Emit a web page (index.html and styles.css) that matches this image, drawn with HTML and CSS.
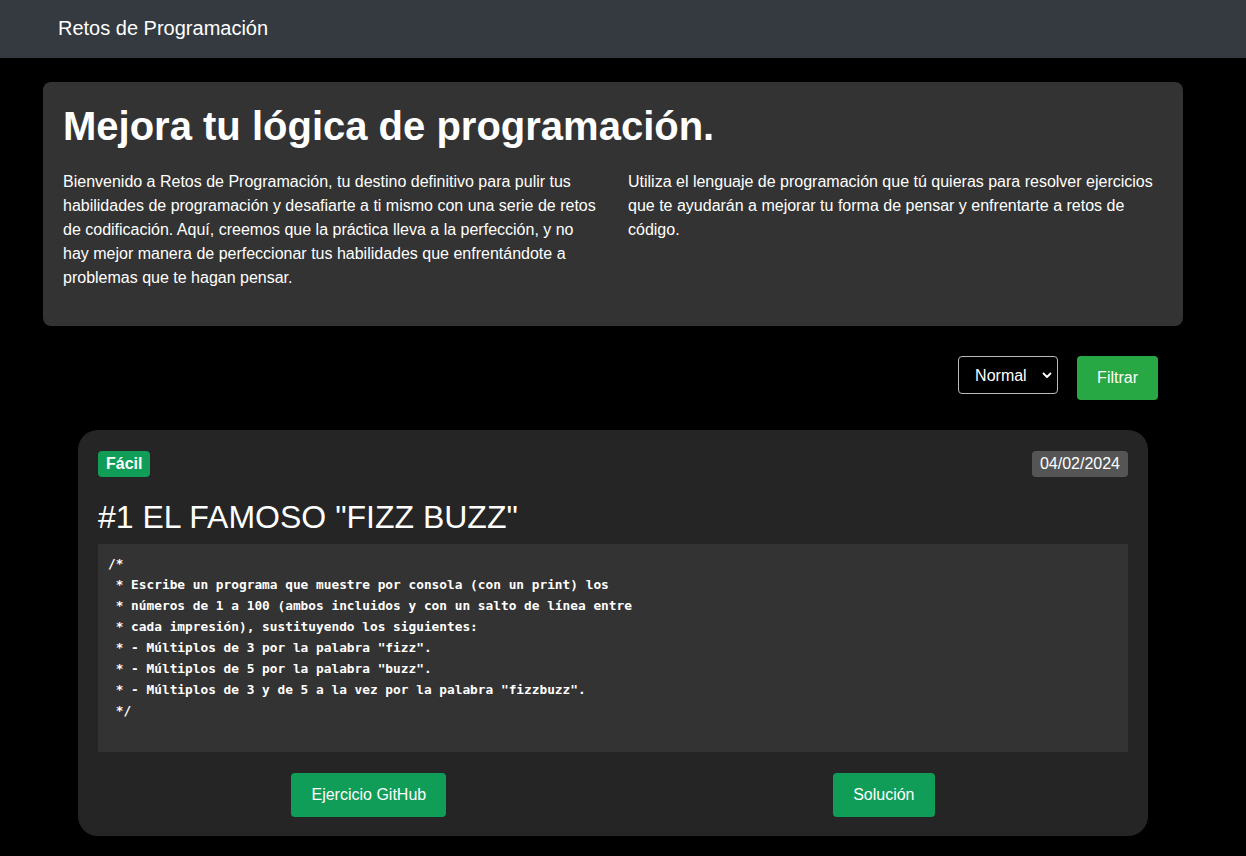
FILE: index.html
```html
<!DOCTYPE html>
<html lang="es">
<head>
<meta charset="utf-8">
<title>Retos de Programación</title>
<link rel="stylesheet" href="styles.css">
</head>
<body>
<nav class="navbar">
  <a class="brand" href="#">Retos de Programación</a>
</nav>
<main class="container">
  <section class="hero">
    <h1 class="hero-title">Mejora tu lógica de programación.</h1>
    <div class="hero-cols">
      <p>Bienvenido a Retos de Programación, tu destino definitivo para pulir tus habilidades de programación y desafiarte a ti mismo con una serie de retos de codificación. Aquí, creemos que la práctica lleva a la perfección, y no hay mejor manera de perfeccionar tus habilidades que enfrentándote a problemas que te hagan pensar.</p>
      <p>Utiliza el lenguaje de programación que tú quieras para resolver ejercicios que te ayudarán a mejorar tu forma de pensar y enfrentarte a retos de código.</p>
    </div>
  </section>

  <form class="filter">
    <div class="select-wrap">
      <select class="select">
        <option>Normal</option>
        <option>Fácil</option>
        <option>Difícil</option>
      </select>
      <svg class="chevron" width="10" height="7" viewBox="0 0 10 7"><path d="M1.5 1.5 L5 5 L8.5 1.5" fill="none" stroke="#fff" stroke-width="1.8" stroke-linecap="round" stroke-linejoin="round"/></svg>
    </div>
    <button type="button" class="btn btn-filter">Filtrar</button>
  </form>

  <article class="card">
    <div class="card-head">
      <span class="badge badge-easy">Fácil</span>
      <span class="badge badge-date">04/02/2024</span>
    </div>
    <h2 class="card-title">#1 EL FAMOSO "FIZZ BUZZ"</h2>
    <pre class="code">/*
 * Escribe un programa que muestre por consola (con un print) los
 * números de 1 a 100 (ambos incluidos y con un salto de línea entre
 * cada impresión), sustituyendo los siguientes:
 * - Múltiplos de 3 por la palabra "fizz".
 * - Múltiplos de 5 por la palabra "buzz".
 * - Múltiplos de 3 y de 5 a la vez por la palabra "fizzbuzz".
 */

</pre>
    <div class="card-actions">
      <a class="btn btn-green" href="#">Ejercicio GitHub</a>
      <a class="btn btn-green" href="#">Solución</a>
    </div>
  </article>
</main>
</body>
</html>
```

FILE: styles.css
```css
* { box-sizing: border-box; }

body {
  margin: 0;
  background: #000;
  color: #fff;
  font-family: "Liberation Sans", Arial, sans-serif;
  font-size: 16px;
  line-height: 1.5;
}

.navbar {
  height: 58px;
  background: #343a40;
  display: flex;
  align-items: center;
  padding-left: 58px;
}

.brand {
  color: #fff;
  text-decoration: none;
  font-size: 20px;
  line-height: 30px;
  margin-top: -2px;
}

.container {
  width: 1140px;
  margin: 24px 0 0 43px;
}

.hero {
  background: #333;
  border-radius: 8px;
  padding: 20px 20px 20px;
}

.hero-title {
  margin: 0 0 20px;
  font-size: 40px;
  line-height: 48px;
  font-weight: bold;
}

.hero-cols {
  display: grid;
  grid-template-columns: 536px 1fr;
  gap: 29px;
}

.hero-cols p {
  margin: 0 0 16px;
}

.filter {
  display: flex;
  justify-content: flex-end;
  align-items: flex-start;
  gap: 19px;
  margin: 30px 25px 30px 0;
}

.select-wrap {
  position: relative;
}

.select {
  appearance: none;
  -webkit-appearance: none;
  width: 100px;
  height: 38px;
  background: #000;
  color: #fff;
  border: 1px solid #bbb;
  border-radius: 4px;
  padding: 0 16px;
  font-family: "Liberation Sans", Arial, sans-serif;
  font-size: 16px;
}

.chevron {
  position: absolute;
  right: 6px;
  top: 16px;
  pointer-events: none;
}

.btn {
  display: inline-block;
  border: 0;
  border-radius: 4px;
  color: #fff;
  text-decoration: none;
  font-family: "Liberation Sans", Arial, sans-serif;
  font-size: 16px;
  line-height: 24px;
  padding: 10px 20px;
  cursor: pointer;
}

.btn-filter {
  background: #28a745;
}

.btn-green {
  background: #0f9d58;
}

.card {
  margin: 0 35px;
  background: #252525;
  border-radius: 20px;
  padding: 21px 20px 19px;
}

.card-head {
  display: flex;
  justify-content: space-between;
  align-items: center;
}

.badge {
  display: inline-block;
  border-radius: 4px;
  padding: 1px 8px;
  font-size: 16px;
  line-height: 24px;
}

.badge-easy {
  background: #0f9d58;
  font-weight: bold;
}

.badge-date {
  background: #555;
}

.card-title {
  margin: 21px 0 8px;
  font-size: 32px;
  line-height: 38px;
  font-weight: normal;
}

.code {
  margin: 0;
  background: #333;
  padding: 9px 10px 10px;
  font-family: "DejaVu Sans Mono", "Liberation Mono", monospace;
  font-size: 12.8px;
  line-height: 21px;
  font-weight: bold;
  color: #fff;
}

.card-actions {
  display: flex;
  justify-content: space-around;
  margin-top: 21px;
}
```
